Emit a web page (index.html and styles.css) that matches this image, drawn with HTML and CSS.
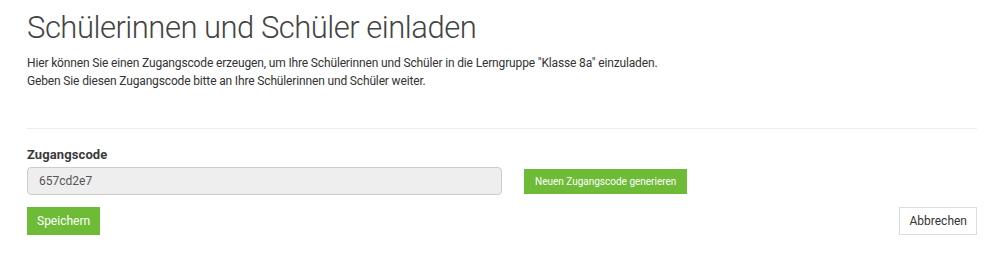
FILE: index.html
```html
<!DOCTYPE html>
<html lang="de">
<head>
    <meta charset="UTF-8">
    <meta name="viewport" content="width=device-width, initial-scale=1.0">
    <title>Schülerinnen und Schüler einladen</title>
    <link rel="stylesheet" href="styles.css">
</head>
<body>

    <div class="page">
        <h1>Schülerinnen und Schüler einladen</h1>
        <p class="intro">
            Hier können Sie einen Zugangscode erzeugen, um Ihre Schülerinnen und Schüler in die Lerngruppe "Klasse 8a" einzuladen.<br>
            Geben Sie diesen Zugangscode bitte an Ihre Schülerinnen und Schüler weiter.
        </p>

        <hr class="divider">

        <form class="code-form">
            <label for="code">Zugangscode</label>
            <div class="code-row">
                <input type="text" id="code" name="code" value="657cd2e7" readonly>
                <button type="button" class="btn btn-green btn-small">Neuen Zugangscode generieren</button>
            </div>
            <div class="actions">
                <button type="submit" class="btn btn-green">Speichern</button>
                <button type="button" class="btn btn-default">Abbrechen</button>
            </div>
        </form>
    </div>

</body>
</html>
```

FILE: styles.css
```css
body {
    margin: 0;
    font-family: Roboto, "Liberation Sans", sans-serif;
    color: #333;
    background-color: #fff;
}
.page {
    padding: 0 23px 0 27px;
}
h1 {
    font-size: 31px;
    font-weight: 300;
    letter-spacing: -0.5px;
    color: #444;
    line-height: 40px;
    margin: 8px 0 0;
}
.intro {
    font-size: 12px;
    letter-spacing: -0.15px;
    line-height: 18px;
    margin: 6px 0 0;
}
.divider {
    border: none;
    border-top: 1px solid #eee;
    margin: 38px 0 0;
}
.code-form {
    margin-top: 18px;
}
label {
    display: block;
    font-size: 13px;
    font-weight: bold;
    line-height: 16px;
    letter-spacing: 0.1px;
    color: #3a3a3a;
}
.code-row {
    display: flex;
    align-items: center;
    margin-top: 4px;
}
input[type="text"] {
    width: 475px;
    height: 28px;
    box-sizing: border-box;
    padding: 0 11px;
    font-family: Roboto, "Liberation Sans", sans-serif;
    font-size: 12px;
    color: #555;
    background-color: #eee;
    border: 1px solid #ccc;
    border-radius: 4px;
}
.btn {
    font-family: Roboto, "Liberation Sans", sans-serif;
    font-size: 12px;
    height: 28px;
    padding: 0 9px;
    border: 1px solid transparent;
    cursor: pointer;
}
.btn-green {
    background-color: #6dbb37;
    border-color: #6dbb37;
    color: #fff;
}
.btn-small {
    font-size: 10px;
    height: 25px;
    margin-left: 22px;
    padding: 0 10px;
}
.btn-default {
    background-color: #fff;
    border-color: #ddd;
    color: #333;
}
.actions {
    display: flex;
    justify-content: space-between;
    margin-top: 12px;
}
```
